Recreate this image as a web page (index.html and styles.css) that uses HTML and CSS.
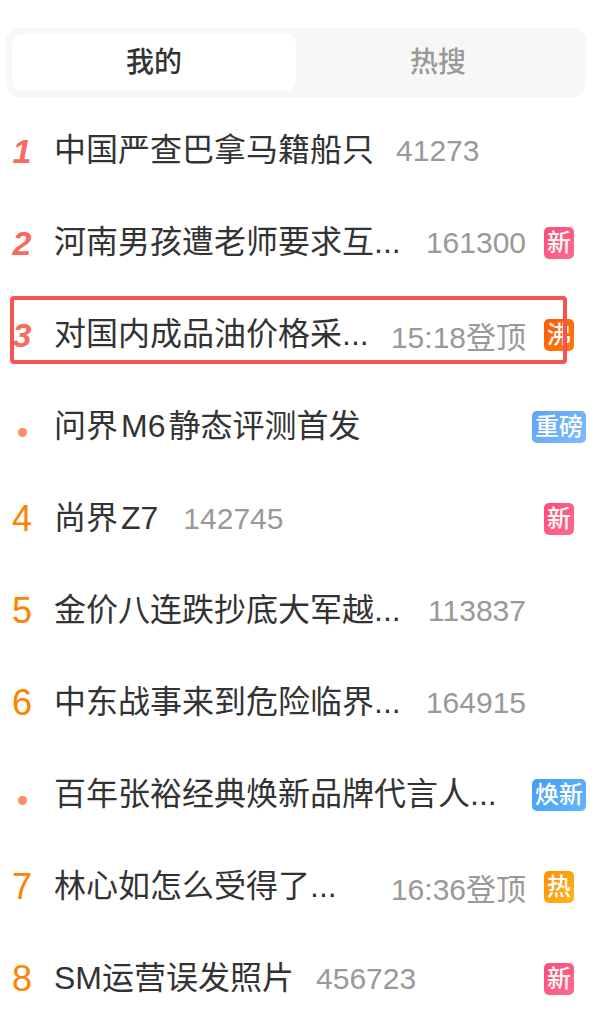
FILE: index.html
```html
<!DOCTYPE html>
<html lang="zh-CN">
<head>
    <meta charset="UTF-8">
    <meta name="viewport" content="width=device-width, initial-scale=1.0">
    <title>热搜</title>
    <link rel="stylesheet" href="styles.css">
</head>
<body>

    <div class="page">
        <div class="tabs">
            <div class="tab active">我的</div>
            <div class="tab">热搜</div>
        </div>

        <ul class="hot-list">
            <li class="hot-item">
                <span class="rank top">1</span>
                <div class="item-main">
                    <span class="item-title">中国严查巴拿马籍船只</span>
                    <span class="item-count">41273</span>
                </div>
                <div class="item-tag"></div>
            </li>
            <li class="hot-item">
                <span class="rank top">2</span>
                <div class="item-main">
                    <span class="item-title clipped">河南男孩遭老师要求互...</span>
                    <span class="item-count">161300</span>
                </div>
                <div class="item-tag"><span class="badge new">新</span></div>
            </li>
            <li class="hot-item">
                <span class="rank top">3</span>
                <div class="item-main">
                    <span class="item-title clipped">对国内成品油价格采...</span>
                    <span class="item-count">15:18登顶</span>
                </div>
                <div class="item-tag"><span class="badge boil">沸</span></div>
            </li>
            <li class="hot-item">
                <span class="rank"><i class="dot"></i></span>
                <div class="item-main">
                    <span class="item-title">问界<span class="latin">M6</span>静态评测首发</span>
                </div>
                <div class="item-tag"><span class="badge promo">重磅</span></div>
            </li>
            <li class="hot-item">
                <span class="rank">4</span>
                <div class="item-main">
                    <span class="item-title">尚界<span class="latin">Z7</span></span>
                    <span class="item-count">142745</span>
                </div>
                <div class="item-tag"><span class="badge new">新</span></div>
            </li>
            <li class="hot-item">
                <span class="rank">5</span>
                <div class="item-main">
                    <span class="item-title clipped">金价八连跌抄底大军越...</span>
                    <span class="item-count">113837</span>
                </div>
                <div class="item-tag"></div>
            </li>
            <li class="hot-item">
                <span class="rank">6</span>
                <div class="item-main">
                    <span class="item-title clipped">中东战事来到危险临界...</span>
                    <span class="item-count">164915</span>
                </div>
                <div class="item-tag"></div>
            </li>
            <li class="hot-item">
                <span class="rank"><i class="dot"></i></span>
                <div class="item-main">
                    <span class="item-title clipped">百年张裕经典焕新品牌代言人...</span>
                </div>
                <div class="item-tag"><span class="badge fresh">焕新</span></div>
            </li>
            <li class="hot-item">
                <span class="rank">7</span>
                <div class="item-main">
                    <span class="item-title clipped">林心如怎么受得了...</span>
                    <span class="item-count">16:36登顶</span>
                </div>
                <div class="item-tag"><span class="badge hot">热</span></div>
            </li>
            <li class="hot-item">
                <span class="rank">8</span>
                <div class="item-main">
                    <span class="item-title">SM运营误发照片</span>
                    <span class="item-count">456723</span>
                </div>
                <div class="item-tag"><span class="badge new">新</span></div>
            </li>
        </ul>

        <!-- marker drawn over the third row -->
        <div class="highlight-box"></div>
    </div>

</body>
</html>
```

FILE: styles.css
```css
body {
    margin: 0;
    background-color: #ffffff;
    font-family: "Liberation Sans", "Noto Sans CJK SC", sans-serif;
    color: #333333;
}

.page {
    position: relative;
    padding-top: 28px;
}

.tabs {
    display: grid;
    grid-template-columns: 1fr 1fr;
    margin: 0 16px 0 6px;
    padding: 6px;
    background-color: #f7f7f7;
    border-radius: 14px;
}

.tab {
    height: 57px;
    line-height: 57px;
    text-align: center;
    font-size: 28px;
    font-weight: 500;
    color: #999999;
    border-radius: 10px;
}

.tab.active {
    background-color: #ffffff;
    color: #333333;
}

.hot-list {
    list-style: none;
    margin: 8px 0 0 0;
    padding: 0;
}

.hot-item {
    display: flex;
    align-items: center;
    height: 92px;
    padding-right: 16px;
}

.rank {
    width: 44px;
    margin-right: 10px;
    display: flex;
    justify-content: center;
    font-size: 36px;
    color: #ff8200;
}

.rank.top {
    font-size: 34px;
    font-weight: bold;
    font-style: italic;
    color: #f86b5e;
}

.dot {
    width: 9px;
    height: 9px;
    margin-top: 10px;
    border-radius: 50%;
    background-color: #ff8c5a;
}

.item-main {
    flex: 1;
    min-width: 0;
    display: flex;
    align-items: center;
    gap: 22px;
}

.item-title {
    font-size: 32px;
    line-height: 1.3;
    color: #333333;
    white-space: nowrap;
}

.item-title.clipped {
    flex: 1 0 auto;
}

.latin {
    margin: 0 3px;
}

.item-count {
    font-size: 30px;
    color: #999999;
    white-space: nowrap;
}

.item-tag {
    width: 54px;
    margin-left: 6px;
    display: flex;
    justify-content: center;
}

.badge {
    height: 32px;
    padding: 0 3px;
    line-height: 32px;
    font-size: 24px;
    font-weight: 500;
    color: #ffffff;
    border-radius: 5px;
}

.badge.new {
    background: linear-gradient(135deg, #ff4a76, #ff6b8c);
}

.badge.boil {
    background: linear-gradient(135deg, #ff5a00, #ff7a10);
}

.badge.hot {
    background: linear-gradient(135deg, #ff9000, #ffb320);
}

.badge.promo {
    background: linear-gradient(135deg, #5fa3f7, #7cbcff);
}

.badge.fresh {
    background: linear-gradient(135deg, #459df5, #62b6ff);
}

.highlight-box {
    position: absolute;
    left: 10px;
    top: 296px;
    width: 549px;
    height: 60px;
    border: 4px solid #f75353;
    border-radius: 4px;
}
```
